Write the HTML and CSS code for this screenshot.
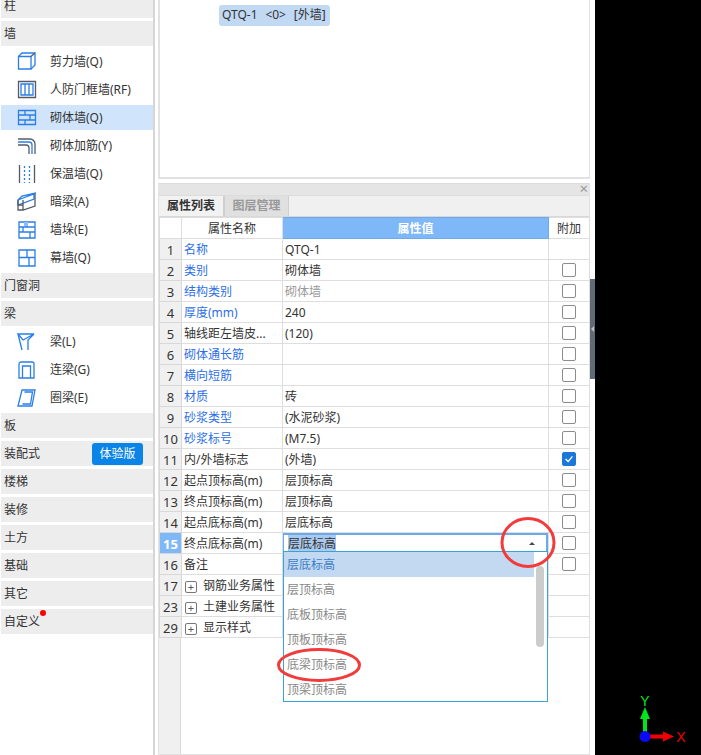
FILE: index.html
```html
<!DOCTYPE html>
<html lang="zh">
<head>
<meta charset="utf-8">
<title>属性列表</title>
<link rel="stylesheet" href="styles.css">
</head>
<body>
<div class="app">
  <aside class="sidebar">
    <div class="tree">
      <div class="head">柱</div>
      <div class="head">墙</div>
      <div class="group">
        <div class="item"><svg class="ico" viewBox="0 0 20 20"><path class="b" d="M1.500 4.500h12.500v12.500h-12.500z"/><path class="b" d="M1.500 4.500l3.500-3.500h13v12l-4 4"/><path class="g" d="M14 4.500l4-3.500"/></svg><span>剪力墙(Q)</span></div>
        <div class="item"><svg class="ico" viewBox="0 0 20 20"><path class="d" d="M1.500 1.500h17v16h-17z"/><path class="b" d="M4 4h12v11h-12zM8 4v11M12 4v11"/></svg><span>人防门框墙(RF)</span></div>
        <div class="item sel"><svg class="ico" viewBox="0 0 20 20"><path class="b" d="M1.500 2.500h17v14h-17zM1.500 7h17M1.500 12h17M8 2.500v4.500M13 7v5M8 12v4.500"/></svg><span>砌体墙(Q)</span></div>
        <div class="item"><svg class="ico" viewBox="0 0 20 20"><path class="d" d="M1 3h12a5 5 0 0 1 5 5v10"/><path class="b" d="M1 6h11a3 3 0 0 1 3 3v9"/><path class="d" d="M1 9h8a3 3 0 0 1 3 3v6"/></svg><span>砌体加筋(Y)</span></div>
        <div class="item"><svg class="ico" viewBox="0 0 20 20"><path class="d" d="M2.500 1v18M17.500 1v18"/><path class="dots" d="M7.500 2v17M12.500 2v17"/></svg><span>保温墙(Q)</span></div>
        <div class="item"><svg class="ico" viewBox="0 0 20 20"><path class="b" d="M1 8l16-6v5l-16 6zM1 8l4-4 14-3-2 1"/><path class="d" d="M1 8v10h5l12-4v-12M1 13h5M6 8v10"/></svg><span>暗梁(A)</span></div>
        <div class="item"><svg class="ico" viewBox="0 0 20 20"><path class="b" d="M2 2h16v16h-16zM2 7h16M2 12h16M10 2v5M6 7v5M13 12v6"/><path class="f" d="M7 2h4v4h-4z"/></svg><span>墙垛(E)</span></div>
        <div class="item"><svg class="ico" viewBox="0 0 20 20"><path class="b" d="M2 2h16v16h-16zM2 9.500h16M10 2v7.500M12 9.500v8.500"/></svg><span>幕墙(Q)</span></div>
      </div>
      <div class="head">门窗洞</div>
      <div class="head">梁</div>
      <div class="group">
        <div class="item"><svg class="ico" viewBox="0 0 20 20"><path class="b" d="M1 2h16l-11 6zM1 2l4 16M17 2l-6 6v10"/></svg><span>梁(L)</span></div>
        <div class="item"><svg class="ico" viewBox="0 0 20 20"><path class="b" d="M2 18v-14a2 2 0 0 1 2-2h11a2 2 0 0 1 2 2v14zM5.500 18v-12h8v12"/></svg><span>连梁(G)</span></div>
        <div class="item"><svg class="ico" viewBox="0 0 20 20"><path class="b" d="M5 2h13l-3 16h-14zM7.500 4h8l-2 12h-8"/></svg><span>圈梁(E)</span></div>
      </div>
      <div class="head">板</div>
      <div class="head">装配式<span class="badge">体验版</span></div>
      <div class="head">楼梯</div>
      <div class="head">装修</div>
      <div class="head">土方</div>
      <div class="head">基础</div>
      <div class="head">其它</div>
      <div class="head custom">自定义<i class="dot"></i></div>
    </div>
  </aside>

  <main class="main">
    <section class="preview">
      <div class="chip">QTQ-1&nbsp; &lt;0&gt;&nbsp; [外墙]</div>
    </section>
    <section class="props">
      <div class="titlebar"><span class="close">×</span></div>
      <div class="tabs">
        <div class="tab active">属性列表</div>
        <div class="tab">图层管理</div>
      </div>
      <table class="grid">
        <colgroup><col class="c0"><col class="c1"><col class="c2"><col class="c3"></colgroup>
        <thead>
          <tr><th></th><th>属性名称</th><th class="hval">属性值</th><th>附加</th></tr>
        </thead>
        <tbody>
          <tr><td class="n">1</td><td class="k">名称</td><td>QTQ-1</td><td></td></tr>
          <tr><td class="n">2</td><td class="k">类别</td><td>砌体墙</td><td><i class="cb"></i></td></tr>
          <tr><td class="n">3</td><td class="k">结构类别</td><td class="mut">砌体墙</td><td><i class="cb"></i></td></tr>
          <tr><td class="n">4</td><td class="k">厚度(mm)</td><td>240</td><td><i class="cb"></i></td></tr>
          <tr><td class="n">5</td><td>轴线距左墙皮...</td><td>(120)</td><td><i class="cb"></i></td></tr>
          <tr><td class="n">6</td><td class="k">砌体通长筋</td><td></td><td><i class="cb"></i></td></tr>
          <tr><td class="n">7</td><td class="k">横向短筋</td><td></td><td><i class="cb"></i></td></tr>
          <tr><td class="n">8</td><td class="k">材质</td><td>砖</td><td><i class="cb"></i></td></tr>
          <tr><td class="n">9</td><td class="k">砂浆类型</td><td>(水泥砂浆)</td><td><i class="cb"></i></td></tr>
          <tr><td class="n">10</td><td class="k">砂浆标号</td><td>(M7.5)</td><td><i class="cb"></i></td></tr>
          <tr><td class="n">11</td><td>内/外墙标志</td><td>(外墙)</td><td><i class="cb on"><svg viewBox="0 0 14 14"><path d="M3 7l3 3 5-6"/></svg></i></td></tr>
          <tr><td class="n">12</td><td>起点顶标高(m)</td><td>层顶标高</td><td><i class="cb"></i></td></tr>
          <tr><td class="n">13</td><td>终点顶标高(m)</td><td>层顶标高</td><td><i class="cb"></i></td></tr>
          <tr><td class="n">14</td><td>起点底标高(m)</td><td>层底标高</td><td><i class="cb"></i></td></tr>
          <tr><td class="n cur">15</td><td>终点底标高(m)</td><td class="edit"><div class="input"><mark>层底标高</mark><i class="arrow"></i></div></td><td><i class="cb"></i></td></tr>
          <tr><td class="n">16</td><td>备注</td><td></td><td><i class="cb"></i></td></tr>
          <tr><td class="n">17</td><td><i class="plus">+</i>钢筋业务属性</td><td></td><td></td></tr>
          <tr><td class="n">23</td><td><i class="plus">+</i>土建业务属性</td><td></td><td></td></tr>
          <tr><td class="n">29</td><td><i class="plus">+</i>显示样式</td><td></td><td></td></tr>
        </tbody>
      </table>
      <div class="tail"><div class="tail-n"></div></div>

      <div class="dropdown">
        <div class="opt first">层底标高</div>
        <div class="opt">层顶标高</div>
        <div class="opt">底板顶标高</div>
        <div class="opt">顶板顶标高</div>
        <div class="opt">底梁顶标高</div>
        <div class="opt">顶梁顶标高</div>
        <div class="thumb"></div>
      </div>
    </section>
    <svg class="mark mark-a" viewBox="0 0 56 51"><ellipse cx="28" cy="25.500" rx="26" ry="24"/></svg>
    <svg class="mark mark-b" viewBox="0 0 84 34"><ellipse cx="42" cy="17" rx="40.500" ry="15.500"/></svg>
  </main>

  <div class="divider"><div class="grip"><i></i></div></div>

  <div class="canvas">
    <svg class="axis" viewBox="0 0 70 50">
      <rect class="ax-y" x="12" y="14" width="4" height="22"/>
      <path class="ax-y-f" d="M14 6l5 12h-10z"/>
      <rect class="ax-x" x="16" y="33.500" width="18" height="4"/>
      <path class="ax-x-f" d="M43 35.500l-11 5v-10z"/>
      <circle class="ax-o" cx="14" cy="35.500" r="5.500"/>
      <text class="lab-y" x="14" y="5" text-anchor="middle">Y</text>
      <text class="lab-x" x="50" y="40.500" text-anchor="middle">X</text>
    </svg>
  </div>
</div>
</body>
</html>
```
FILE: styles.css
```css
* { box-sizing: border-box; }
html, body { margin: 0; padding: 0; background: #fff; }
body {
  font-family: "Noto Sans", "Noto Sans CJK SC", sans-serif;
  font-size: 12px;
  color: #333;
  overflow: hidden;
}
i { font-style: normal; }
.app { display: flex; width: 701px; height: 755px; overflow: hidden; }

/* sidebar */
.sidebar { width: 155px; flex: none; height: 755px; padding-left: 1px; border-right: 2px solid #d6d6d6; overflow: hidden; background: #fff; }
.tree { display: flex; flex-direction: column; gap: 3px; margin-top: -7px; }
.head { position: relative; height: 25px; line-height: 25px; padding-left: 3px; background: #ededed; color: #333; display: flex; align-items: center; justify-content: space-between; padding-right: 10px; }
.custom { justify-content: flex-start; }
.badge { width: 51px; height: 22px; line-height: 22px; text-align: center; background: #0a84e6; color: #fff; border-radius: 3px; }
.dot { position: absolute; left: 39px; top: 1px; width: 6px; height: 6px; border-radius: 50%; background: #f00; }
.group { display: flex; flex-direction: column; gap: 3px; }
.item { height: 25px; display: flex; align-items: center; padding-left: 16px; color: #333; }
.item span { margin: 0 0 2px 13px; white-space: nowrap; }
.item.sel { background: #d0e5fb; }
.ico { width: 20px; height: 20px; flex: none; }
.ico path { fill: none; stroke-width: 1.300; }
.ico .b { stroke: #2a7fe6; }
.ico .d { stroke: #555b66; }
.ico .g { stroke: #555b66; }
.ico .f { fill: #8fbdf2; stroke: none; }
.ico .dots { stroke: #2a7fe6; stroke-dasharray: 2 2; }

/* main */
.main { position: relative; width: 435px; flex: none; height: 755px; padding: 0 0 0 3px; display: flex; flex-direction: column; background: #fff; }
.preview { height: 179px; flex: none; border: 2px solid #e2e2e2; border-top: 0; border-right-width: 1px; padding: 5px 0 0 59px; }
.chip { width: 111px; height: 21px; line-height: 20px; padding-left: 3px; background: #c1d9f3; border-radius: 3px; white-space: nowrap; color: #333; font-size: 12px; word-spacing: 0.800px; }
.props { position: relative; margin-top: 4px; flex: 1; display: flex; flex-direction: column; border: 1px solid #e2e2e2; border-top: 0; border-left-width: 1px; min-height: 0; }
.titlebar { height: 12px; flex: none; background: #e5e5e5; border-top: 1px solid #dcdcdc; position: relative; }
.close { position: absolute; right: 1px; top: -4px; line-height: 16px; font-size: 15px; color: #999; }
.tabs { height: 22px; flex: none; display: flex; background: #f0f0f0; border-top: 1px solid #dcdcdc; border-bottom: 1px solid #d8d8d8; }
.tab { width: 65px; line-height: 20px; text-align: center; font-weight: 700; color: #999; background: #e0e0e0; border: 1px solid #cfcfcf; border-width: 0 1px; }
.tab.active { background: #f2f2f2; color: #333; border-left: 0; }
.grid { border-collapse: collapse; table-layout: fixed; width: 430px; flex: none; }
.c0 { width: 22px; }
.c1 { width: 101px; }
.c2 { width: 266px; }
.c3 { width: 41px; }
.grid th, .grid td { height: 21px; padding: 2px 2px 0; border: 1px solid #dedede; font-weight: 400; white-space: nowrap; overflow: hidden; color: #333; line-height: 16px; text-align: left; }
.grid th { text-align: center; height: 21px; padding: 1px 2px 0; }
.grid th.hval { background: #7fb8f8; color: #fff; font-weight: 700; border-color: #6ea9ea; }
.grid td:last-child { text-align: center; padding: 0; }
.grid td.n { background: #f0f0f0; text-align: center; padding: 1px 0 0; border-color: #d8d8d8; font-size: 13px; }
.grid td.k { color: #2d6fe8; }
.grid td.mut { color: #999; }
.grid td.n.cur { background: #7fb8f8; color: #fff; font-weight: 700; }
.grid td.edit { padding: 0; position: relative; }
.input { height: 20px; border: 2px solid #6aa9ea; border-width: 1px 2px 1px 1px; border-top-width: 2px; border-bottom-color: #3aa3d6; padding-left: 4px; display: flex; align-items: center; justify-content: space-between; padding-right: 11px; }
.input mark { background: #a9c9ee; color: #333; line-height: 17px; height: 17px; }
.arrow { width: 0; height: 0; border: 3px solid transparent; border-bottom: 3px solid #445; border-top: 0; }
.cb { display: block; width: 14px; height: 14px; margin: 0 auto; border: 1px solid #8c8c8c; border-radius: 2px; background: #fff; }
.cb.on { background: #1c78d8; border-color: #1c78d8; }
.cb svg { display: block; width: 12px; height: 12px; }
.cb path { fill: none; stroke: #fff; stroke-width: 1.600; }
.plus { display: inline-block; width: 12px; height: 12px; line-height: 10px; margin: 0 6px 0 1px; border: 1px solid #777; border-radius: 2px; text-align: center; font-size: 11px; color: #555; vertical-align: -1px; }
.tail { flex: 1; }
.tail-n { width: 22px; height: 100%; background: #f0f0f0; border-right: 1px solid #d8d8d8; }

.dropdown { position: absolute; left: 124px; top: 368px; width: 265px; height: 151px; background: #fff; border: 1px solid #3aa3d6; }
.opt { height: 25px; line-height: 25px; padding-left: 3px; color: #888; width: 250px; }
.opt.first { background: #c2d9f1; color: #3a7cc8; }
.thumb { position: absolute; left: 252px; top: 14px; width: 8px; height: 81px; background: #ccc; border-radius: 4px; }

.mark { position: absolute; fill: none; stroke: #f23b3b; stroke-width: 3; overflow: visible; }
.mark ellipse { fill: none; }
.mark-a { left: 345px; top: 517px; width: 56px; height: 51px; }
.mark-b { left: 122px; top: 648px; width: 84px; height: 34px; }

/* divider + canvas */
.divider { width: 5px; flex: none; background: #fff; }
.grip { margin-top: 279px; height: 100px; background: #5f6b76; display: flex; align-items: center; }
.grip i { width: 0; height: 0; border: 3px solid transparent; border-right: 3px solid #b9c0c6; border-left: 0; margin-left: 1px; }
.canvas { flex: 1; background: #000; height: 755px; display: flex; align-items: flex-end; justify-content: flex-end; }
.axis { width: 70px; height: 50px; margin: 0 0 4.500px 0; overflow: visible; }
.ax-y, .ax-y-f { fill: #00e51c; }
.ax-x, .ax-x-f { fill: #f00000; }
.ax-o { fill: #0a0af5; }
.axis text { font-family: "Liberation Sans", sans-serif; font-size: 14px; }
.lab-y { fill: #00e51c; }
.lab-x { fill: #f00000; }
```
